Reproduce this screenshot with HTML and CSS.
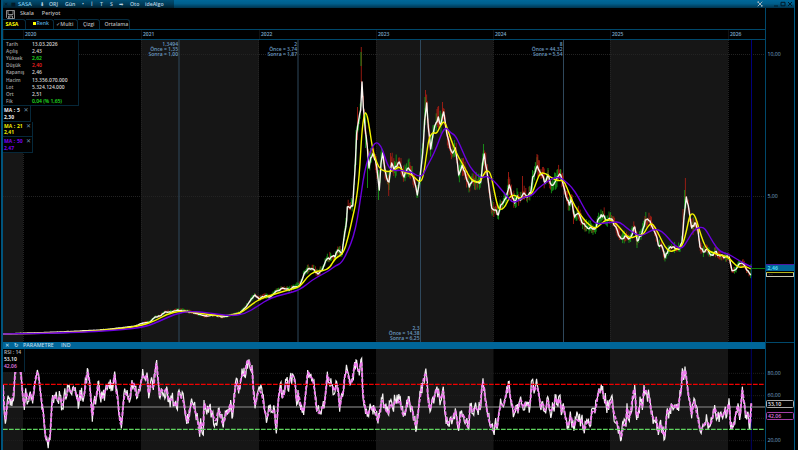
FILE: index.html
```
<!DOCTYPE html>
<html lang="tr">
<head>
    <meta charset="UTF-8">
    <meta name="viewport" content="width=device-width, initial-scale=1.0">
    <title>SASA</title>
    <link rel="stylesheet" href="styles.css">
</head>
<body>
    <div class="window">
        <header class="title-bar">
            <div class="title-items">
                <span class="dim">✕</span><span class="dim">■</span><span class="symbol">SASA</span><span>⬇</span><span>ORJ</span><span>Gün</span><span>•</span><span>İ</span><span>T</span><span>S</span><span>➡</span><span>Oto</span><span>ideAlgo</span>
            </div>
            <div class="window-buttons">
                <svg class="tool" viewBox="0 0 6 6"><path d="M.7.7l4.6 4.6M5.3.7L.7 5.3M.5 1.5L2 .5M4 5.5l1.5-1"/></svg>
                <svg viewBox="0 0 6 6"><path d="M1 5h4"/></svg>
                <svg viewBox="0 0 6 6"><path d="M1 1.3h4v3.5H1z"/></svg>
                <svg viewBox="0 0 6 6"><path d="M1 1l4 4M5 1L1 5"/></svg>
            </div>
        </header>

        <div class="workspace">
            <main>
                <nav class="menu">
                    <svg class="save" viewBox="0 0 9 9"><path d="M.5.5h8v8H1.5l-1-1zM2 .5v4h5v-4M2.5 8.5V6h4v2.5M3.7 6.5v1.5"/></svg>
                    <span>Skala</span>
                    <span>Periyot</span>
                </nav>
                <div class="tabs">
                    <span class="tab active">SASA</span>
                    <span class="tab color"><i></i>Renk</span>
                    <span class="tab multi">✓Multi</span>
                    <span class="tab draw">Çizgi</span>
                    <span class="tab average">Ortalama</span>
                </div>
                <div class="years">
                    <span></span><span>2020</span><span>2021</span><span>2022</span><span>2023</span><span>2024</span><span>2025</span><span>2026</span>
                </div>

                <section class="price">
                    <svg id="priceChart" viewBox="3 40 762 302"></svg>
                    <div class="overlay">
                        <dl class="info">
                            <dt>Tarih</dt><dd>13.03.2026</dd>
                            <dt>Açılış</dt><dd>2,43</dd>
                            <dt>Yüksek</dt><dd class="up">2,62</dd>
                            <dt>Düşük</dt><dd class="down">2,40</dd>
                            <dt>Kapanış</dt><dd>2,46</dd>
                            <dt>Hacim</dt><dd>13.356.070.000</dd>
                            <dt>Lot</dt><dd>5.324.124.000</dd>
                            <dt>Ort</dt><dd>2,51</dd>
                            <dt>Fik</dt><dd class="up">0,04 (% 1,65)</dd>
                        </dl>
                        <div class="ma ma5"><span>MA : 5</span><b>✕</b><p>2,30</p></div>
                        <div class="ma ma21"><span>MA : 21</span><b>✕</b><p>2,41</p></div>
                        <div class="ma ma50"><span>MA : 50</span><b>✕</b><p>2,47</p></div>
                    </div>
                </section>

                <div class="pane-bar"><span>✕</span><span>↻</span><span>PARAMETRE</span><span>IND</span></div>

                <section class="rsi">
                    <svg id="rsiChart" viewBox="9 27 2286 303"></svg>
                    <div class="rsi-box">
                        <p>RSI : 14</p>
                        <p class="white">53,10</p>
                        <p class="pink">42,06</p>
                    </div>
                </section>
            </main>

            <aside>
                <div class="axis price-axis">
                    <span class="p10">10,00</span>
                    <span class="p5">5,00</span>
                    <span class="p-last">2,46</span>
                    <span class="p-ma21">2,41</span>
                </div>
                <div class="axis rsi-axis">
                    <span class="r80">80,00</span>
                    <span class="r60">60,00</span>
                    <span class="r20">20,00</span>
                    <span class="tag r-white">53,10</span>
                    <span class="tag r-pink">42,06</span>
                </div>
            </aside>
        </div>
    </div>
    <script src="charts.js"></script>
</body>
</html>
```
FILE: styles.css
```
* {
    box-sizing: border-box;
}
body {
    margin: 0;
    height: 450px;
    overflow: hidden;
    background-color: #000;
    color: #b8b8b8;
    font-family: "Open Sans", "DejaVu Sans", sans-serif;
    font-size: 5.2px;
    line-height: 7px;
}
p, dl, dd {
    margin: 0;
}
svg {
    display: block;
    fill: none;
}
.window {
    width: 794px;
    height: 450px;
    margin-left: 1px;
    border-left: 2px solid #00547c;
    border-right: 1px solid #005a85;
    display: flex;
    flex-direction: column;
}

/* Title bar */
.title-bar {
    height: 8px;
    display: flex;
    justify-content: space-between;
    background: linear-gradient(#006899, #005f8c 45%, #00334d);
}
.title-items {
    display: grid;
    grid-template-columns: 7px 7px 22px 9px 16px 17px 9px 9px 10px 9px 11px 15px 30px;
    width: 171px;
    padding-left: 1px;
    line-height: 9px;
    color: #b9d4e2;
    font-weight: 600;
    background: linear-gradient(#004e73, #003c59 50%, #001f2e);
}
.title-items .dim {
    color: #001b29;
}
.title-items .symbol {
    color: #7ec8ee;
    font-size: 5.7px;
}
.window-buttons {
    display: flex;
    gap: 1px;
    padding: 1px 1px 0 0;
}
.window-buttons svg {
    width: 6px;
    height: 6px;
    stroke: #001a28;
    stroke-width: 1;
}
.window-buttons .tool {
    stroke: #9fb3bd;
    margin-right: 9px;
}

/* Layout */
.workspace {
    display: grid;
    grid-template-columns: 762px 29px;
    height: 442px;
}
.menu {
    height: 11px;
    display: flex;
    align-items: center;
    gap: 8px;
    padding-left: 3px;
    font-size: 5.4px;
    font-weight: 600;
    color: #bbb;
}
.menu .save {
    width: 9px;
    height: 9px;
    margin: 1px -3px 0 0;
    stroke: #aaa;
    stroke-width: .8;
}
.tabs {
    height: 11px;
    display: flex;
    border-bottom: 1px solid #00486b;
}
.tab {
    border: 1px solid #062d41;
    border-bottom: 0;
    border-left: 0;
    border-radius: 0 3px 0 0;
    padding: 0 2.5px;
    line-height: 9px;
    font-weight: 600;
    font-size: 5.2px;
    white-space: nowrap;
    flex: none;
}
.tab.active {
    width: 23px;
    color: #ff0;
    font-weight: 700;
}
.tab.color {
    width: 28px;
    padding-left: 6.5px;
    color: #55a5da;
    line-height: 7.5px;
}
.tab.multi {
    width: 24px;
    padding-left: 2px;
}
.tab.draw {
    width: 22px;
    padding-left: 5px;
}
.tab.average {
    width: 30px;
    padding-left: 4.5px;
}
.tab i {
    display: inline-block;
    width: 3px;
    height: 3px;
    margin-right: 1px;
    background-color: #ff0;
}
.years {
    height: 10px;
    display: grid;
    grid-template-columns: 20px 118px 118px 117px 117px 117px 118px 37px;
    border-bottom: 1px solid #00486b;
    color: #7da9cb;
    font-weight: 600;
    font-size: 5px;
    line-height: 9px;
}
.years span {
    padding-left: 1px;
    border-left: 1px solid #111;
}

/* Price pane */
.price {
    position: relative;
    height: 302px;
}
.price svg {
    width: 762px;
    height: 302px;
}
.overlay {
    position: absolute;
    left: 0;
    top: 0;
}
.info {
    width: 76px;
    height: 66px;
    display: grid;
    grid-template-columns: 26px 1fr;
    grid-auto-rows: 7.05px;
    padding: 1.3px 0 0 3px;
    background-color: #000;
    border-right: 1px solid #06283a;
    border-bottom: 1px solid #06283a;
    white-space: nowrap;
}
.info dt {
    font-size: 4.8px;
    font-weight: 600;
    color: #a4a4a4;
}
.info dd {
    color: #d2d2d2;
    font-weight: 600;
    font-size: 5px;
}
.info .up {
    color: #20e020;
}
.info .down {
    color: #f02020;
}
.ma {
    width: 30px;
    height: 15.5px;
    display: grid;
    grid-template-columns: 22px 6px;
    grid-auto-rows: 6.8px;
    padding: 1px 0 0 1px;
    background-color: #000;
    border-right: 1px solid #06283a;
    border-bottom: 1px solid #06283a;
    font-weight: 700;
    font-size: 5px;
    word-spacing: .4px;
    white-space: nowrap;
}
.ma b {
    font-weight: 400;
    font-size: 6px;
    color: #6a8ea0;
}
.ma5 {
    width: 28px;
    grid-template-columns: 19.5px 6px;
    color: #eee;
}
.ma21 {
    color: #ee0;
}
.ma50 {
    color: #7a00f5;
}
.pane-bar {
    height: 7px;
    display: grid;
    grid-template-columns: 9px 9px 38px 1fr;
    padding-left: 2px;
    background-color: #006598;
    color: #b7d8e8;
    font-size: 5.3px;
    font-weight: 600;
}

/* RSI pane */
.rsi {
    position: relative;
    height: 101px;
}
.rsi svg {
    width: 762px;
    height: 101px;
}
.rsi-box {
    position: absolute;
    left: 0;
    top: 0;
    width: 22px;
    height: 23px;
    padding-left: 1px;
    background-color: #000;
    border-right: 1px solid #06283a;
    color: #bbb;
    font-size: 5px;
    font-weight: 600;
    white-space: nowrap;
}
.white {
    color: #fff;
}
.pink {
    color: #e27be2;
}

/* Chart parts */
.band {
    fill: #161616;
}
.grid {
    stroke: #232323;
    stroke-width: 1;
    stroke-dasharray: 1 1;
}
.rsi .grid {
    stroke-width: 3;
    stroke-dasharray: 3 3;
    stroke: #1f1f1f;
}
.marker {
    stroke: #2f485c;
    stroke-width: 1;
}
.cursor {
    stroke: #00007c;
    stroke-width: 1;
}
.rsi .cursor {
    stroke-width: 2.5;
}
.marker-text {
    fill: #6d9dc4;
    font-size: 5px;
    text-anchor: end;
    font-weight: 600;
}
.candle-up {
    stroke: #18a818;
    stroke-width: .8;
}
.candle-down {
    stroke: #b82014;
    stroke-width: .8;
}
.line5, .line21, .line50 {
    stroke: #f8f4f0;
    stroke-width: 1.4;
    stroke-linejoin: round;
}
.line21 {
    stroke: #f4f400;
}
.line50 {
    stroke: #6c00e0;
}
.last-price {
    stroke: #0b7a0b;
}
.rsi-line {
    stroke: #f4f0f2;
    stroke-width: 3.6;
}
.rsi-average {
    stroke: #f07cf0;
    stroke-width: 6;
    stroke-dasharray: 11 5;
}
.level-high, .level-low, .level-mid {
    stroke: #f00000;
    stroke-width: 4;
    stroke-dasharray: 14 4;
}
.level-low {
    stroke: #5fd45f;
}
.level-mid {
    stroke: #666;
    stroke-dasharray: none;
}

/* Right axis */
aside {
    border-left: 1px solid #00486b;
    color: #78aed4;
    font-size: 5.2px;
}
.axis {
    position: relative;
    height: 334px;
}
.rsi-axis {
    height: 108px;
    border-top: 1px solid #00486b;
}
.axis span {
    position: absolute;
    left: 0;
    padding-left: 1.5px;
    width: 28px;
}
.p10 {
    top: 43px;
}
.p5 {
    top: 185px;
}
.axis .p-last {
    top: 256px;
    height: 7px;
    background-color: #006598;
    border-top: 1px solid #4b1aa0;
    color: #52d4f0;
    font-weight: 700;
    line-height: 6px;
}
.axis .p-ma21 {
    top: 264px;
    height: 5px;
    border: 1px solid #c8c8b0;
    border-top-color: #b5b51c;
    border-radius: 1px;
    line-height: 3px;
    font-size: 2.2px;
    color: #888;
}
.r80 {
    top: 27px;
}
.r60 {
    top: 49px;
}
.r20 {
    top: 94px;
}
.axis .tag {
    height: 8px;
    background-color: #000;
    border: 1px solid #aaa;
    border-radius: 1.5px;
    padding-left: 1px;
    color: #eee;
    line-height: 6px;
    font-weight: 600;
}
.axis .r-white {
    top: 57px;
}
.axis .r-pink {
    top: 69px;
    border-color: #a53fa5;
    color: #dc70dc;
}
```
FILE: charts.js
```
const priceChart = document.getElementById('priceChart');
const rsiChart = document.getElementById('rsiChart');

// Points are "x,y" pairs in the viewBox of each chart
const ma5 = '3,334 30,333 60,332 100,330 120,328 135,326 143,323 150,322 155,317 160,316 165,312 172,312 178,310 185,311 195,313 205,316 215,315 222,317 232,315 240,313 245,308 250,301 255,295 259,299 265,296 270,297 277,291 283,288 289,290 295,287 300,285 304,274 308,269 313,269 318,274 323,268 327,259 331,257 335,257 338,250 342,254 344.7,233 346.7,220 347.3,207 352.7,206 355,170 356.7,133 358.7,120 360.7,110 362,82 363.3,107 365.3,130 367.3,147 369,168 370.7,158 373.3,153 376.7,167 379.3,190 381,163 382.7,153 385,170 386.7,178 389,182 391.7,163 394,170 399.3,162 404,177 408.3,168 413.3,177 417.3,195 420,177 422.7,153 424.7,120 426.7,103 428.3,127 430.7,149 433.3,133 436,123 438.3,117 440.7,125 443.7,112 446.7,133 450,148 452.7,153 455.3,148 458.7,175 462.3,165 466,177 469.3,187 472.7,180 476.7,182 480.7,182 482.7,163 484.3,154 486.7,170 489.3,190 491.7,208 495.3,210 498.3,215 500.7,205 506,198 509.3,185 511.7,195 514.7,203 517.3,196 520.7,200 524,193 527.3,197 530.7,193 532.7,177 535,173 537.3,166 540,172 543.3,177 545.3,183 548,175 551.3,185 555,182 557.3,177 560.7,175 563.3,185 567.3,200 569.3,205 571.3,198 574.7,217 578.3,213 581.7,222 586.7,227 595,229 599,218 603.3,215 606.7,220 611.7,219 616,227 620,237 630,238 634.7,227 637.3,241 642,233 645.3,220 650,221 652.7,228 656,235 658.3,245 661.3,245 665,257.7 668.3,250 672.7,247 679.3,249 682,242 684,217 686.3,197 689.3,212 691.7,228 694.7,223 697.7,228 700,247 703.3,252 707.3,249 712,255 715,252 720,256 725,257 729.3,257 732,270.7 735,270 738.3,265 743.3,264 746.7,270 750.7,275';
const ma21 = '3,334 60,333 110,330 140,326 155,321 167,314 180,311 195,312 210,315 230,316 243,312 252,304 262,298 275,294 288,290 300,287 307,277 315,271 323,271 330,267.7 335,258 343.3,254 348.3,237 352.7,217 355.7,204 359.3,177 361.7,133 364.3,113 366.7,113 369.3,127 372.7,150 376.7,163 380.7,170 388.3,172 395,170 399,166 403.3,172 408.3,173 413.3,176 420,183 423.3,177 426.7,153 429,138 432.7,132 436.7,134 440.7,125 444,121 447.3,128 451.7,142 458.3,157 463.3,165 468.3,175 473.3,182 480,182 483.3,175 486.7,170 490.7,173 494,190 497.7,207 500.7,210 505,207 510,196 515,195 518.3,198 523,198 531.7,195 536,183 540,173 545,173 551.7,178 558.3,181 563.3,180 566.7,187 571.7,200 578.3,212 586.7,223 595,229 600,225 606.7,219 613.3,221 620,228 625,234 630,238.7 638.3,235 643.3,235 647.3,227 651.3,223 655,227 660,237 665,247 670,252 675,250 680,248 683.3,243 686.7,230 689.3,217 692,213 695.3,216 699.3,230 703.3,242 707.3,250 713.3,253 720,255 728.3,257 733.3,263 739.3,268 745,266 750.7,269';
const ma50 = '3,334 70,333 120,330 145,327 160,321 175,314 190,311 210,313 230,316 245,314 258,306 270,298 285,294 300,290 312,280 323,274 330,270 335,266 341.7,263 348.3,250 353.3,237 357.3,220 361.7,190 364.3,173 368.3,157 373.3,145 376.7,142 381,146 384.3,155 388.3,167 393.3,171 401.7,170 406.7,172 411.7,172 417.3,176 422.7,176 426.7,167 431.7,158 436.7,147 441.7,133 446,127 450.7,133 455,135 460,145 465,157 470,167 476.7,175 481.7,178 486.7,176 493.3,180 500,188 506.7,196 511.7,202 516.7,202 523.3,197 531.7,196 538.3,188 546.7,182 553.3,178 560,177 566,182 571.7,187 578.3,197 585,210 591.7,220 596.7,224 605,223 613.3,222 620,222 626.7,228 635,234 641.7,236 648.3,232 655,229 661.7,231 668.3,238 675,246 681.7,249 686.7,242 691.7,233 696.7,228 703.3,227 707.3,232 713.3,243 720,252 728.3,254 735,258 743.3,263 751.7,267';
const rsi = '9,135 14,230 18,240 22,182 40,182 44,110 50,75 58,80 63,100 68,165 73,210 77,145 84,185 91,155 98,190 104,130 112,90 118,125 124,180 130,215 136,290 142,305 150,300 153,240 158,165 166,170 174,185 180,165 187,205 192,165 200,170 205,140 213,160 220,140 228,160 237,195 240,150 247,175 254,160 258,115 264,90 270,140 277,245 282,180 289,175 294,125 300,170 308,175 316,150 324,133 340,133 344,95 348,150 354,180 358,230 364,265 370,185 376,155 384,175 390,180 396,120 403,135 410,175 418,150 424,120 430,105 436,120 441,98 446,175 452,125 460,150 465,100 470,60 474,120 480,175 484,145 492,160 500,140 506,185 515,175 522,190 530,205 537,150 544,175 552,185 558,235 565,250 572,190 580,195 586,215 594,245 599,290 602,235 610,285 612,180 618,210 628,200 636,220 648,250 655,205 662,225 668,255 674,240 680,210 686,220 692,180 698,230 704,160 709,115 716,160 722,120 728,100 734,110 740,65 747,58 752,90 756,75 760,150 765,205 772,160 780,150 788,170 794,215 802,235 808,205 816,215 824,210 829,280 834,190 841,130 847,175 852,165 859,120 864,150 870,115 880,105 886,130 890,195 894,150 900,190 911,225 917,160 923,90 930,110 938,115 944,150 950,215 958,220 966,200 972,205 978,150 982,95 988,130 997,135 1004,160 1010,125 1015,150 1019,215 1025,160 1030,160 1034,105 1042,90 1050,135 1056,125 1062,85 1068,60 1074,95 1080,85 1085,55 1088,160 1094,195 1102,230 1108,210 1115,210 1121,195 1128,220 1134,250 1140,210 1146,175 1153,200 1160,215 1166,225 1170,185 1178,205 1186,180 1194,190 1199,175 1203,200 1210,230 1218,210 1225,170 1230,200 1236,200 1242,240 1250,265 1256,200 1262,160 1268,130 1275,100 1280,110 1284,180 1290,215 1296,180 1304,170 1311,140 1318,170 1324,180 1330,140 1336,225 1343,255 1350,235 1358,240 1366,205 1371,240 1376,272 1382,220 1390,225 1398,245 1406,270 1410,190 1416,220 1424,200 1432,210 1440,210 1445,150 1449,115 1456,180 1464,230 1472,260 1480,275 1485,250 1491,270 1497,215 1504,190 1510,200 1516,175 1525,125 1530,170 1536,190 1542,225 1548,195 1554,220 1562,170 1570,210 1576,185 1583,195 1590,200 1596,120 1602,160 1607,135 1615,150 1623,210 1628,185 1637,220 1643,170 1650,215 1660,205 1668,165 1674,200 1680,165 1684,225 1690,190 1697,240 1706,265 1711,215 1721,270 1728,235 1736,245 1744,235 1753,280 1760,240 1770,260 1777,205 1785,220 1792,175 1797,145 1800,160 1806,150 1812,170 1818,190 1826,210 1834,170 1840,215 1850,245 1858,270 1864,298 1870,250 1878,260 1881,190 1886,240 1892,220 1898,170 1904,135 1910,240 1916,210 1922,185 1927,210 1932,135 1940,160 1948,170 1954,220 1962,240 1969,230 1975,285 1982,240 1992,300 1998,250 2002,205 2008,215 2014,190 2022,205 2027,195 2032,210 2038,180 2044,150 2047,85 2051,120 2055,80 2060,120 2065,165 2070,185 2075,235 2082,175 2087,205 2094,235 2101,275 2106,265 2114,250 2122,245 2129,260 2138,235 2144,195 2152,235 2160,220 2168,235 2176,200 2180,230 2187,175 2192,270 2200,260 2209,215 2214,190 2219,240 2224,185 2227,140 2232,190 2238,225 2244,215 2250,265 2254,190';

// Wicks that stand out of the average: x, top, bottom, direction
const spikes = [
    [361.3, 47, 82, 'down'], [361, 52, 66, 'up'], [357.5, 107, 140, 'down'], [356, 130, 165, 'up'],
    [365.5, 112, 148, 'up'], [367.5, 150, 188, 'up'], [378.5, 170, 200, 'up'], [388.7, 175, 196, 'down'],
    [390.5, 153, 172, 'down'], [425.5, 90, 120, 'down'], [425, 97, 125, 'up'], [437, 109, 125, 'down'],
    [442.5, 102, 120, 'down'], [454.3, 140, 155, 'up'], [483.5, 144, 165, 'up'], [485, 152, 175, 'down'],
    [508.5, 172, 190, 'down'], [522.5, 176, 200, 'down'], [532.5, 170, 190, 'up'], [537, 154, 170, 'down'],
    [548, 168, 180, 'up'], [560.5, 169, 180, 'up'], [573.5, 212, 224, 'down'], [602.7, 211, 220, 'up'],
    [685.4, 178, 200, 'down'], [684.7, 190, 215, 'up'], [683, 209, 240, 'down'], [693, 218, 235, 'down'],
    [637, 235, 248, 'up'], [645, 216, 225, 'down'], [743, 259, 268, 'down'], [751, 264, 276, 'up']
];

function toPoints(text) {
    return text.split(' ').map(pair => pair.split(',').map(Number));
}

function line(cls, x1, y1, x2, y2) {
    return `<line class="${cls}" x1="${x1}" y1="${y1}" x2="${x2}" y2="${y2}"/>`;
}

// Small repeatable random generator, keeps the wicks the same on each load
let seed = 7;
function random() {
    seed = (seed * 16807) % 2147483647;
    return seed / 2147483647;
}

// Value of a polyline at x
function valueAt(points, x) {
    for (let i = 1; i < points.length; i++) {
        if (x <= points[i][0]) {
            const [x1, y1] = points[i - 1];
            const [x2, y2] = points[i];
            return y1 + (y2 - y1) * (x - x1) / (x2 - x1);
        }
    }
    return points[points.length - 1][1];
}

// Keeps every given point and adds uneven steps between them
function roughen(points, step, swing) {
    const out = [];
    for (let i = 0; i < points.length - 1; i++) {
        const [x1, y1] = points[i];
        const [x2, y2] = points[i + 1];
        const count = Math.max(1, Math.round((x2 - x1) / step));
        out.push([x1, y1]);
        for (let k = 1; k < count; k++) {
            const y = y1 + (y2 - y1) * k / count;
            out.push([x1 + (x2 - x1) * k / count, y + (random() - 0.5) * swing(y)]);
        }
    }
    out.push(points[points.length - 1]);
    return out;
}

// Smooth path through the points
function curve(points) {
    let d = `M${points[0]}`;
    for (let i = 1; i < points.length - 1; i++) {
        const mx = (points[i][0] + points[i + 1][0]) / 2;
        const my = (points[i][1] + points[i + 1][1]) / 2;
        d += `Q${points[i]} ${mx},${my}`;
    }
    return d + `L${points[points.length - 1]}`;
}

function bands(scale, top, bottom) {
    return [[3, 23], [141, 259], [376, 493.5], [610, 728]].map(([a, b]) =>
        `<rect class="band" x="${a * scale}" y="${top}" width="${(b - a) * scale}" height="${bottom - top}"/>`).join('');
}

function drawPrice() {
    const points = toPoints(ma5);
    let out = bands(1, 40, 342);

    [54.5, 196.5].forEach(y => out += line('grid', 3, y, 765, y));
    [23.5, 141.5, 258.5, 376.5, 493.5, 610.5, 728.5].forEach(x => out += line('grid', x, 40, x, 342));

    const markers = [
        [179, 46, ['1,3494', 'Önce = 1,35', 'Sonra = 1,00']],
        [298, 46, ['2', 'Önce = 3,74', 'Sonra = 1,87']],
        [420.5, 329.7, ['2,3', 'Önce = 14,38', 'Sonra = 6,25']],
        [563.5, 46, ['8', 'Önce = 44,32', 'Sonra = 5,54']]
    ];
    markers.forEach(([x, y, rows]) => {
        out += line('marker', x, 40, x, 342);
        rows.forEach((text, i) => {
            out += `<text class="marker-text" x="${x - 1}" y="${y + i * 5}">${text}</text>`;
        });
    });
    out += line('cursor', 751.5, 40, 751.5, 342);

    for (let x = 145; x < 751; x += 0.8) {
        const y = valueAt(points, x);
        const size = Math.min(12, Math.max(1.2, (334 - y) / 14));
        const up = valueAt(points, x + 1) < y + (random() - 0.5) * 5;
        const top = y - size * random() - 0.7;
        const bottom = y + size * random() * 0.8 + 0.7;
        out += line(up ? 'candle-up' : 'candle-down', x, top, x, bottom);
    }
    spikes.forEach(([x, top, bottom, way]) => out += line(`candle-${way}`, x, top, x, bottom));

    const daily = roughen(points, 1.2, y => Math.max(0, Math.min(3.5, (336 - y) / 25)));
    out += `<polyline class="line5" points="${daily.join(' ')}"/>`;
    out += `<path class="line21" d="${curve(toPoints(ma21))}"/>`;
    out += `<path class="line50" d="${curve(toPoints(ma50))}"/>`;
    out += line('last-price', 752, 268.5, 765, 268.5);
    priceChart.innerHTML = out;
}

function drawRsi() {
    const points = toPoints(rsi);
    let out = bands(3, 27, 330);

    [100, 167, 235, 302].forEach(y => out += line('grid', 9, y, 2295, y));
    out += line('level-mid', 9, 201, 2295, 201);
    out += line('cursor', 2254, 27, 2254, 330);

    // The raw line swings wider than its average
    out += `<polyline class="rsi-line" points="${roughen(points, 2.4, () => 48).join(' ')}"/>`;
    out += `<path class="rsi-average" d="${curve(points)}"/>`;
    out += line('level-high', 9, 133, 2295, 133);
    out += line('level-low', 9, 268, 2295, 268);
    rsiChart.innerHTML = out;
}

drawPrice();
drawRsi();
```
